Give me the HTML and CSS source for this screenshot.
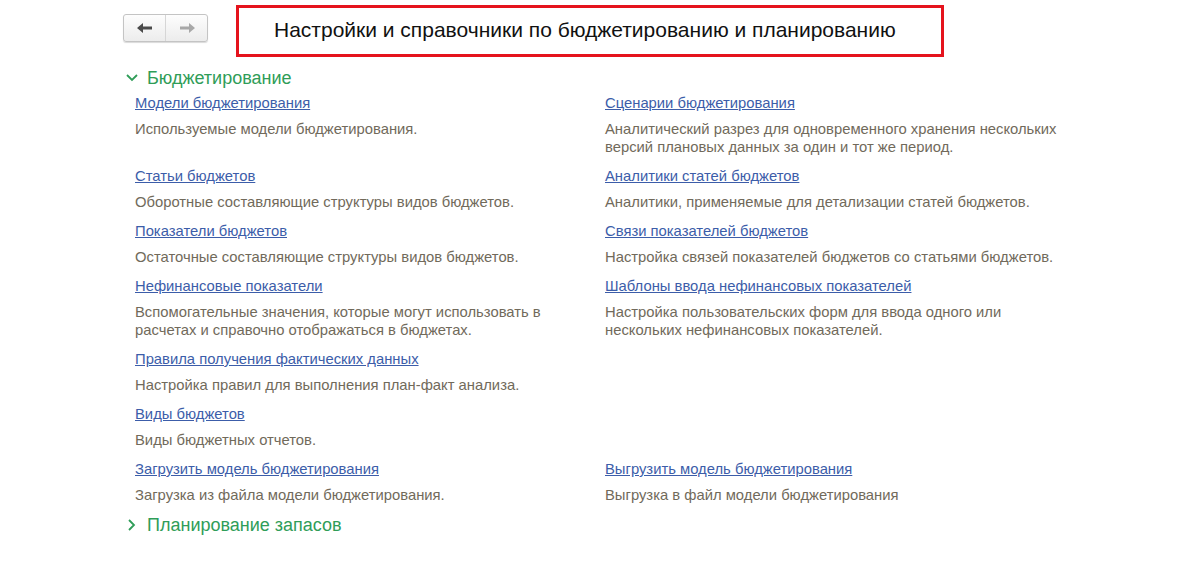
FILE: index.html
```html
<!DOCTYPE html>
<html lang="ru">
<head>
    <meta charset="UTF-8">
    <title>Настройки и справочники по бюджетированию и планированию</title>
    <link rel="stylesheet" href="styles.css">
</head>
<body>

    <div class="topbar">
        <div class="nav-buttons">
            <span class="nav-btn">
                <svg width="18" height="12" viewBox="0 0 18 12"><path d="M1 6 L7 1 L7 4.5 L16 4.5 L16 7.5 L7 7.5 L7 11 Z" fill="#4a4a4a"/></svg>
            </span>
            <span class="nav-btn">
                <svg width="18" height="12" viewBox="0 0 18 12"><path d="M17 6 L11 1 L11 4.5 L2 4.5 L2 7.5 L11 7.5 L11 11 Z" fill="#a8a8a8"/></svg>
            </span>
        </div>
        <div class="title-box">
            <h1>Настройки и справочники по бюджетированию и планированию</h1>
        </div>
    </div>

    <div class="group">
        <div class="group-title">
            <svg class="chevron" width="14" height="10" viewBox="0 0 14 10"><path d="M2 2 L7 7 L12 2" fill="none" stroke="#2f9d58" stroke-width="1.8"/></svg>
            <span>Бюджетирование</span>
        </div>

        <div class="items">
            <div class="item">
                <a href="#">Модели бюджетирования</a>
                <p>Используемые модели бюджетирования.</p>
            </div>
            <div class="item">
                <a href="#">Сценарии бюджетирования</a>
                <p>Аналитический разрез для одновременного хранения нескольких версий плановых данных за один и тот же период.</p>
            </div>

            <div class="item">
                <a href="#">Статьи бюджетов</a>
                <p>Оборотные составляющие структуры видов бюджетов.</p>
            </div>
            <div class="item">
                <a href="#">Аналитики статей бюджетов</a>
                <p>Аналитики, применяемые для детализации статей бюджетов.</p>
            </div>

            <div class="item">
                <a href="#">Показатели бюджетов</a>
                <p>Остаточные составляющие структуры видов бюджетов.</p>
            </div>
            <div class="item">
                <a href="#">Связи показателей бюджетов</a>
                <p>Настройка связей показателей бюджетов со статьями бюджетов.</p>
            </div>

            <div class="item">
                <a href="#">Нефинансовые показатели</a>
                <p>Вспомогательные значения, которые могут использовать в расчетах и справочно отображаться в бюджетах.</p>
            </div>
            <div class="item">
                <a href="#">Шаблоны ввода нефинансовых показателей</a>
                <p>Настройка пользовательских форм для ввода одного или нескольких нефинансовых показателей.</p>
            </div>

            <div class="item">
                <a href="#">Правила получения фактических данных</a>
                <p>Настройка правил для выполнения план-факт анализа.</p>
            </div>
            <div class="item"></div>

            <div class="item">
                <a href="#">Виды бюджетов</a>
                <p>Виды бюджетных отчетов.</p>
            </div>
            <div class="item"></div>

            <div class="item">
                <a href="#">Загрузить модель бюджетирования</a>
                <p>Загрузка из файла модели бюджетирования.</p>
            </div>
            <div class="item">
                <a href="#">Выгрузить модель бюджетирования</a>
                <p>Выгрузка в файл модели бюджетирования</p>
            </div>
        </div>
    </div>

    <div class="group">
        <div class="group-title collapsed">
            <svg class="chevron" width="14" height="14" viewBox="0 0 14 14"><path d="M4 2 L9 7 L4 12" fill="none" stroke="#2f9d58" stroke-width="1.8"/></svg>
            <span>Планирование запасов</span>
        </div>
    </div>

</body>
</html>
```

FILE: styles.css
```css
body {
    font-family: 'Liberation Sans', Arial, sans-serif;
    background-color: #fff;
    margin: 0;
    padding: 0;
    color: #333;
}

.topbar {
    display: flex;
    align-items: flex-start;
    padding: 5px 0 0 123px;
}

.nav-buttons {
    display: flex;
    margin-top: 9px;
    border: 1px solid #c4c4c4;
    border-radius: 3px;
    background: linear-gradient(#fdfdfd, #ececec);
    box-shadow: 0 1px 1px rgba(0, 0, 0, 0.15);
}

.nav-btn {
    width: 41px;
    height: 26px;
    display: flex;
    align-items: center;
    justify-content: center;
}

.nav-btn + .nav-btn {
    border-left: 1px solid #d6d6d6;
}

.title-box {
    margin-left: 28px;
    width: 702px;
    height: 46px;
    border: 3px solid #e5131d;
    display: flex;
    align-items: center;
}

.title-box h1 {
    margin: 0 0 2px 35px;
    font-size: 21px;
    font-weight: normal;
    color: #111;
}

.group {
    padding-left: 125px;
}

.group-title {
    display: flex;
    align-items: center;
    height: 22px;
    margin-top: 10px;
    color: #2f9d58;
    font-size: 18px;
}

.group-title .chevron {
    margin-right: 8px;
}

.group-title.collapsed {
    margin-top: 0;
    height: 20px;
}

.items {
    display: grid;
    grid-template-columns: 470px 470px;
    padding-left: 10px;
    margin-top: 5px;
}

.item {
    padding-bottom: 11px;
}

.item a {
    display: inline-block;
    color: #3c5da9;
    font-size: 14.8px;
    line-height: 18px;
}

.item p {
    margin: 8px 0 0 0;
    color: #716a5b;
    font-size: 14.8px;
    line-height: 18px;
    max-width: 465px;
}
```
